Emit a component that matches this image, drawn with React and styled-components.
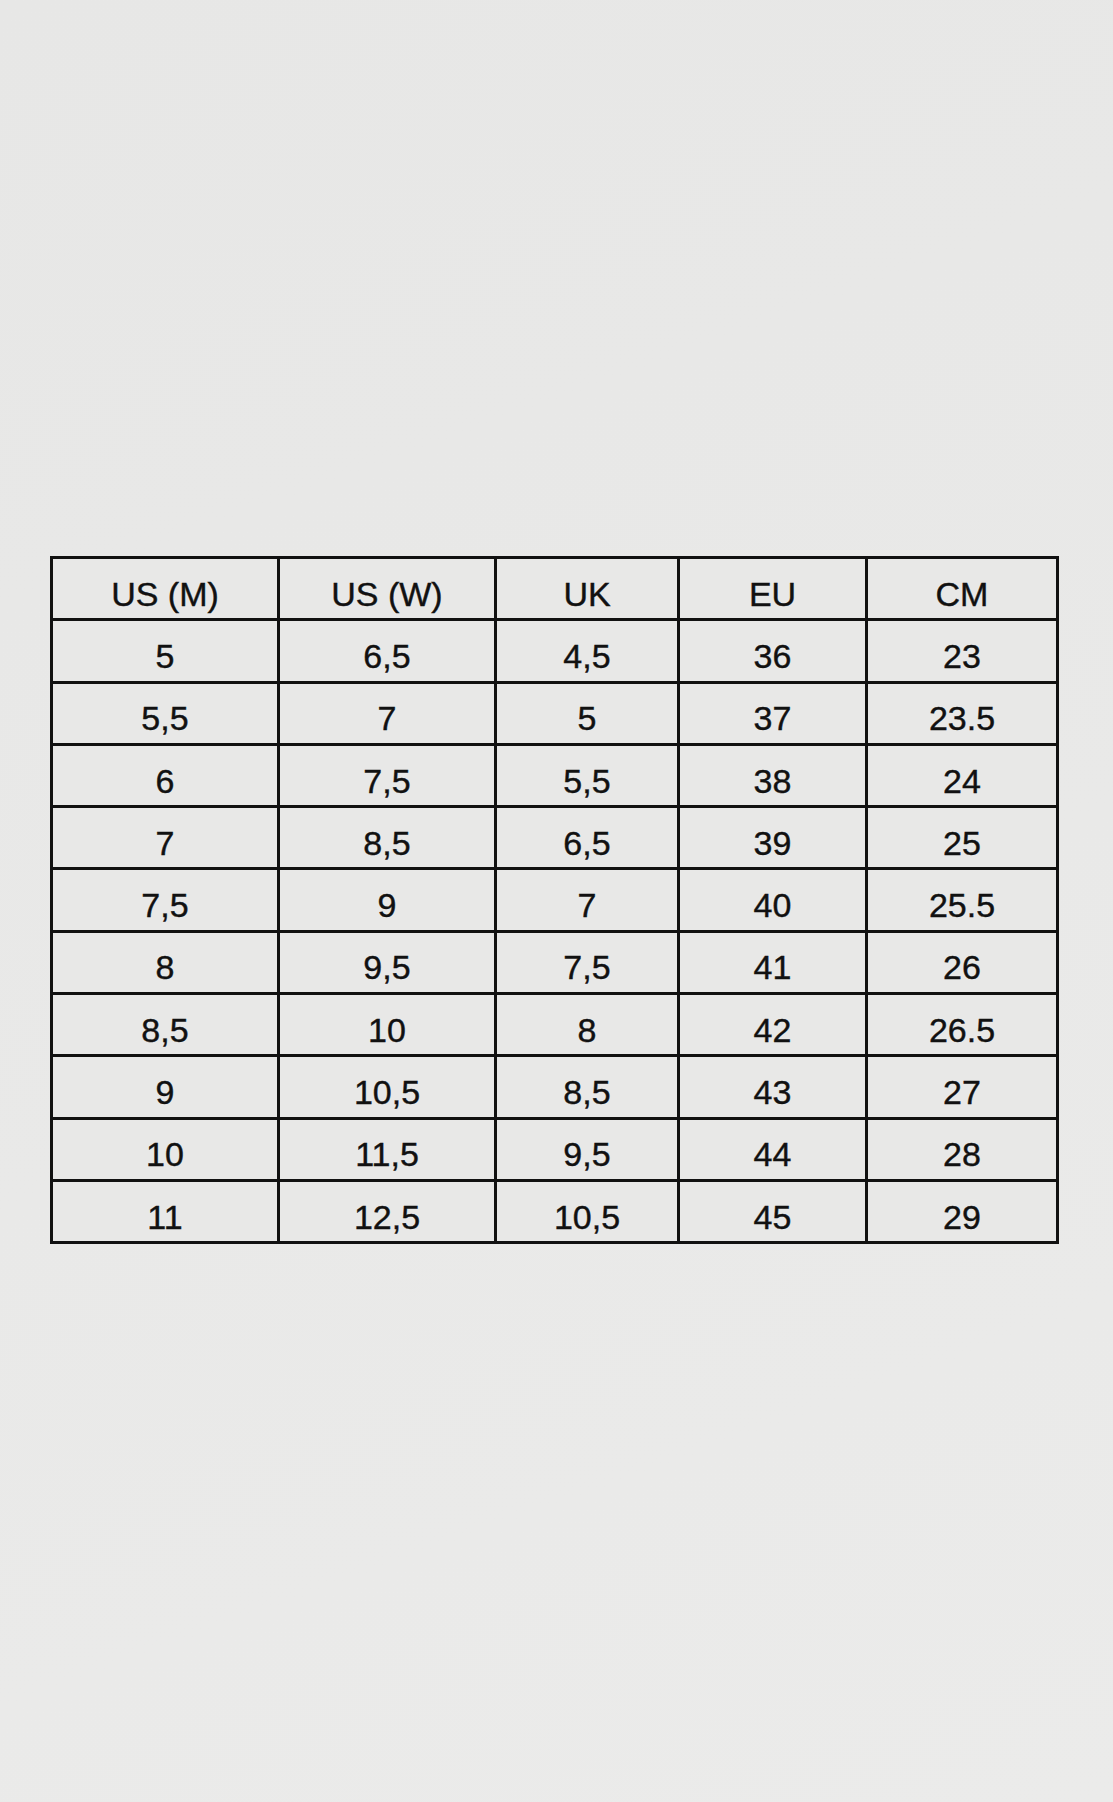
import React from "react";
import styled, { createGlobalStyle } from "styled-components";

const GlobalStyle = createGlobalStyle`
  html, body {
    margin: 0;
    padding: 0;
  }
  body {
    background: #e8e8e7;
    font-family: "Liberation Sans", Arial, sans-serif;
  }
`;

const Page = styled.div`
  min-height: 1802px;
  box-sizing: border-box;
  padding: 556px 54px 0 50px;
  background: linear-gradient(160deg, #e7e7e6 0%, #e9e9e8 55%, #ebebea 100%);
`;

// black grid background + gaps act as the table rules
const Table = styled.div`
  display: grid;
  grid-template-columns: 224px 214px 180px 185px 188px;
  grid-auto-rows: 59.3px;
  gap: 3px;
  padding: 3px;
  width: fit-content;
  background: #111;
`;

const Cell = styled.div`
  display: flex;
  align-items: center;
  justify-content: center;
  box-sizing: border-box;
  padding-top: 10px;
  background: #e8e8e7;
  color: #111;
  font-size: 34px;
  line-height: 1;
  -webkit-text-stroke: 0.4px #111;
`;

const headers = ["US (M)", "US (W)", "UK", "EU", "CM"];

const rows = [
  ["5", "6,5", "4,5", "36", "23"],
  ["5,5", "7", "5", "37", "23.5"],
  ["6", "7,5", "5,5", "38", "24"],
  ["7", "8,5", "6,5", "39", "25"],
  ["7,5", "9", "7", "40", "25.5"],
  ["8", "9,5", "7,5", "41", "26"],
  ["8,5", "10", "8", "42", "26.5"],
  ["9", "10,5", "8,5", "43", "27"],
  ["10", "11,5", "9,5", "44", "28"],
  ["11", "12,5", "10,5", "45", "29"],
];

export default function App() {
  return (
    <>
      <GlobalStyle />
      <Page>
        <Table>
          {headers.map((h) => (
            <Cell key={h}>{h}</Cell>
          ))}
          {rows.map((row, i) =>
            row.map((v, j) => <Cell key={i + "-" + j}>{v}</Cell>)
          )}
        </Table>
      </Page>
    </>
  );
}
